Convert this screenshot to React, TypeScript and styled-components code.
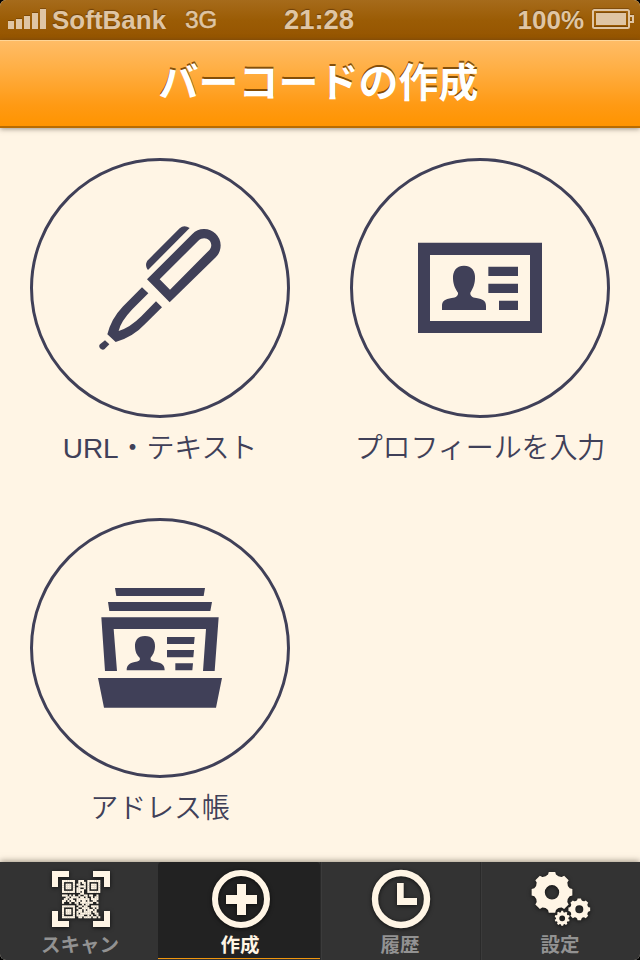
import React from "react";
import styled, { createGlobalStyle, css } from "styled-components";

const INK = "#404058";
const CREAM = "#fff5e5";
const LATIN = '"Liberation Sans", Arial';
const JP = '"Noto Sans CJK JP", sans-serif';

const GlobalStyle = createGlobalStyle`
  *, *::before, *::after { box-sizing: border-box; }
  html, body { margin: 0; padding: 0; background: #000; }
`;

const Screen = styled.div`
  width: 640px;
  height: 960px;
  display: flex;
  flex-direction: column;
  overflow: hidden;
  border-radius: 6px;
  background: ${CREAM};
  font-family: ${LATIN}, ${JP};
`;

const StatusBar = styled.header`
  flex: none;
  height: 40px;
  display: grid;
  grid-template-columns: 1fr auto 1fr;
  align-items: center;
  padding: 0 6px 0 8px;
  background: linear-gradient(#a66b1b 0, #9b5c05 20px, #955400 40px);
  color: #dfc5a4;
  font-weight: 700;
  font-size: 26px;
  line-height: 40px;
  text-shadow: 0 -1px 1px rgba(70, 35, 0, 0.55);
`;

const StatusGroup = styled.div<{ $end?: boolean }>`
  display: flex;
  align-items: center;
  justify-content: ${(p) => (p.$end ? "flex-end" : "flex-start")};
  gap: ${(p) => (p.$end ? "8px" : "6px")};
`;

const Network = styled.span`
  margin-left: 13px;
  font-size: 24px;
  font-weight: 400;
  -webkit-text-stroke: 0.6px currentColor;
`;

const Clock = styled.span`
  margin-right: 4px;
  font-size: 27.5px;
  letter-spacing: -0.1px;
`;

const StatusIcon = styled.svg`
  display: block;
  flex: none;
  margin-bottom: 2px;
  filter: drop-shadow(0 -1px 0 rgba(70, 35, 0, 0.35));
`;

const TitleBar = styled.div`
  flex: none;
  position: relative;
  z-index: 1;
  height: 88px;
  display: flex;
  justify-content: center;
  padding-right: 3px;
  background: linear-gradient(#ffbc66, #ffb047 30%, #ff9a14 75%, #ff9400);
  border-top: 1px solid #ffd596;
  border-bottom: 2px solid #b96c00;
  box-shadow: 0 1px 5px rgba(60, 50, 35, 0.5);
`;

const Title = styled.h1`
  margin: 0;
  font-family: ${JP};
  font-size: 40px;
  line-height: 78px;
  font-weight: 700;
  color: #fff;
  text-shadow: 0 -2px 0 rgba(110, 62, 0, 0.85);
`;

const Menu = styled.main`
  flex: 1;
  display: grid;
  grid-template-columns: 320px 320px;
  grid-auto-rows: 360px;
  padding-top: 30px;
  min-height: 0;
`;

const MenuItem = styled.div`
  display: flex;
  flex-direction: column;
  align-items: center;
`;

const Ring = styled.div`
  width: 260px;
  height: 260px;
  display: grid;
  place-items: center;
  border: 3px solid ${INK};
  border-radius: 50%;
`;

const Label = styled.div`
  margin-top: 11px;
  font-size: 28px;
  line-height: 40px;
  font-weight: 350;
  letter-spacing: -0.1px;
  color: ${INK};
  white-space: nowrap;
`;

const TabBar = styled.nav`
  flex: none;
  position: relative;
  height: 98px;
  display: grid;
  grid-template-columns: 158px 162px 160px 160px;
  background: #333;
  box-shadow: 0 -1px 6px rgba(60, 50, 35, 0.5);
`;

const Tab = styled.div<{ $active?: boolean; $divided?: boolean; $inset: string }>`
  display: flex;
  flex-direction: column;
  align-items: center;
  padding: ${(p) => p.$inset};
  font-family: ${JP};
  font-size: 19.5px;
  line-height: 26px;
  font-weight: 700;
  color: #929292;
  ${(p) =>
    p.$divided &&
    css`
      background: linear-gradient(90deg, #2a2a2a 1px, #3b3b3b 1px, #3b3b3b 2px, transparent 2px);
    `}
  ${(p) =>
    p.$active &&
    css`
      margin-bottom: 1px;
      background: #222;
      border-bottom: 1px solid #f0960f;
      border-radius: 4px 4px 0 0;
      color: ${CREAM};
    `}
`;

const TabLabel = styled.span`
  position: relative;
  left: -1px;
`;

const TabIcon = styled.svg`
  display: block;
  flex: none;
  overflow: visible;
  margin-bottom: 3px;
  filter: drop-shadow(0 1px 2px rgba(0, 0, 0, 0.65));
`;

const SignalIcon = () => (
  <StatusIcon width="38" height="20" fill="#dfc5a4">
    <rect x="0" y="12" width="6" height="8" />
    <rect x="8" y="10" width="6" height="10" />
    <rect x="16" y="7" width="6" height="13" />
    <rect x="24" y="4" width="6" height="16" />
    <rect x="32" y="0" width="6" height="20" />
  </StatusIcon>
);

const BatteryIcon = () => (
  <StatusIcon width="42" height="20" fill="#dfc5a4">
    <rect x="1" y="1" width="36" height="18" rx="1.5" fill="none" stroke="#dfc5a4" strokeWidth="2" />
    <rect x="4" y="4" width="30" height="12" />
    <path d="M38 6h4v8h-4v-2h2V8h-2z" />
  </StatusIcon>
);

const PenIcon = () => (
  <svg width="160" height="150" viewBox="0 9 480 450" fill={INK}>
    <path d="M329 54 204 180C196 171 196 157 205 149L299 55Q312 43 329 54Z" />
    <path
      fillRule="evenodd"
      d="M201 208 337 72A49 49 0 0 1 408 141L269 277ZM239 208 270 239 389 119C405 98 378 72 355 92Z"
    />
    <path
      fillRule="evenodd"
      d="M186 232 205 250 157 298Q122 335 116 363Q150 353 184 319L228 274 246 292 196 341Q160 380 107 396L82 373Q93 327 128 290Z"
    />
    <path d="M75 391 88 403 74 417C66 424 52 411 60 403Z" />
  </svg>
);

const CardIcon = () => (
  <svg width="160" height="120" viewBox="0 -6 480 360" fill={INK}>
    <path fillRule="evenodd" d="M54 38H426V309H54ZM90 75V273H390V75Z" />
    <path d="M265 110h89v28h-89zM265 161h89v28h-89zM297 212h57v28h-57z" />
    <path d="M192 107C216 107 227 124 225 146C224 166 217 178 211 188C210 197 216 202 229 204C249 207 258 213 258 228V240H126V228C126 213 135 207 155 204C169 202 175 197 174 188C167 178 160 166 159 146C158 124 168 107 192 107Z" />
  </svg>
);

const AddressBookIcon = () => (
  <svg width="160" height="150" viewBox="0 9 480 450" fill={INK}>
    <path d="M105 54H375L371 78H109ZM84 96H396L391 123H88ZM54 324H426L408 413H72Z" />
    <path d="M64 142H416L404 303H369L378 177H101L111 303H75Z" />
    <path d="M261 201H344L342 222H261ZM261 240H342L340 262H261ZM286 280H339L337 301H286Z" />
    <path d="M195 198C217 198 226 212 225 230C224 247 218 255 212 263C210 271 216 274 228 276C247 279 254 286 254 301H140C140 286 148 279 164 276C176 274 182 271 179 263C171 255 166 247 165 230C164 212 173 198 195 198Z" />
  </svg>
);

const QR_ROWS = [
  "#######..###..#######",
  "#.....#..#.##.#.....#",
  "#.###.#.##..#.#.###.#",
  "#.###.#..####.#.###.#",
  "#.###.#.##..#.#.###.#",
  "#.....#.####..#.....#",
  "#######.##.#..#######",
  "..........##.........",
  "###.#.#..#..##.##..#.",
  "..##.####.##.#..#.##.",
  ".##.##..#######.####.",
  "##.#.##.##.##.#..##..",
  "#...#..##.#######..#.",
  "........#..#.##......",
  "#######..##.##..####.",
  "#.....#.#..####..#.#.",
  "#.###.#..##.#.###.#..",
  "#.###.#.###.####.##..",
  "#.###.#.#.######..##.",
  "#.....#.####..#.#..#.",
  "#######..##.####.##.#",
];

const QrIcon = () => (
  <TabIcon width="58" height="58" viewBox="0 0 58 58" fill={CREAM}>
    <path d="M0 1H17V7H6V17H0ZM41 1H58V17H52V7H41ZM0 41H6V51H17V57H0ZM52 41H58V57H41V51H52Z" />
    <g transform="translate(10 10) scale(1.81)">
      {QR_ROWS.flatMap((row, y) =>
        [...row].map((cell, x) =>
          cell === "#" ? <rect key={`${x}-${y}`} x={x} y={y} width="1.15" height="1.15" /> : null
        )
      )}
    </g>
  </TabIcon>
);

const PlusIcon = () => (
  <TabIcon width="58" height="58" viewBox="0 0 58 58">
    <circle cx="29" cy="29" r="26" fill="none" stroke={CREAM} strokeWidth="6" />
    <path d="M25 14h9v11h11v9H34v11h-9V34H14v-9h11z" fill={CREAM} />
  </TabIcon>
);

const ClockIcon = () => (
  <TabIcon width="58" height="58" viewBox="0 0 58 58">
    <circle cx="29" cy="29" r="26" fill="none" stroke={CREAM} strokeWidth="6.4" />
    <path d="M25 13h6.7v15H45v7H25z" fill={CREAM} />
  </TabIcon>
);

/** Outline of a cog with a round hole; valleys between teeth are scooped. */
function gearPath(cx: number, cy: number, outer: number, root: number, hole: number, teeth: number) {
  const step = (Math.PI * 2) / teeth;
  const at = (r: number, a: number) =>
    `${(cx + r * Math.cos(a)).toFixed(2)} ${(cy + r * Math.sin(a)).toFixed(2)}`;
  const shoulder = root + (outer - root) * 0.35;
  let d = "";
  for (let i = 0; i < teeth; i++) {
    const a = i * step - Math.PI / 2;
    d += `${i ? "L" : "M"}${at(outer, a - step * 0.2)}L${at(outer, a + step * 0.2)}`;
    d += `L${at(shoulder, a + step * 0.28)}`;
    d += `Q${at(root - (outer - root) * 0.1, a + step * 0.5)} ${at(shoulder, a + step * 0.72)}`;
  }
  return `${d}ZM${cx + hole} ${cy}A${hole} ${hole} 0 1 0 ${cx - hole} ${cy}A${hole} ${hole} 0 1 0 ${cx + hole} ${cy}Z`;
}

const GearsIcon = () => (
  <TabIcon width="58" height="58" viewBox="0 0 58 58" fill={CREAM} fillRule="evenodd">
    <path d={gearPath(20, 22.3, 20.6, 16.8, 7.2, 8)} />
    <path d={gearPath(47.3, 39.3, 11, 8.8, 4, 8)} />
    <path d={gearPath(30.2, 48.3, 7.6, 5.9, 2.9, 10)} />
  </TabIcon>
);

const MENU = [
  { label: "URL・テキスト", Icon: PenIcon },
  { label: "プロフィールを入力", Icon: CardIcon },
  { label: "アドレス帳", Icon: AddressBookIcon },
];

const TABS = [
  { label: "スキャン", Icon: QrIcon, inset: "8px 0 0 4px" },
  { label: "作成", Icon: PlusIcon, active: true, inset: "8px 0 0 4px" },
  { label: "履歴", Icon: ClockIcon, divided: true, inset: "8px 0 0 2px" },
  { label: "設定", Icon: GearsIcon, divided: true, inset: "8px 0 0 2px" },
];

export default function App() {
  return (
    <>
      <GlobalStyle />
      <Screen>
        <StatusBar>
          <StatusGroup>
            <SignalIcon />
            <span>SoftBank</span>
            <Network>3G</Network>
          </StatusGroup>
          <Clock>21:28</Clock>
          <StatusGroup $end>
            <span>100%</span>
            <BatteryIcon />
          </StatusGroup>
        </StatusBar>
        <TitleBar>
          <Title>バーコードの作成</Title>
        </TitleBar>
        <Menu>
          {MENU.map(({ label, Icon }) => (
            <MenuItem key={label}>
              <Ring>
                <Icon />
              </Ring>
              <Label>{label}</Label>
            </MenuItem>
          ))}
        </Menu>
        <TabBar>
          {TABS.map(({ label, Icon, active, divided, inset }) => (
            <Tab key={label} $active={active} $divided={divided} $inset={inset}>
              <Icon />
              <TabLabel>{label}</TabLabel>
            </Tab>
          ))}
        </TabBar>
      </Screen>
    </>
  );
}
